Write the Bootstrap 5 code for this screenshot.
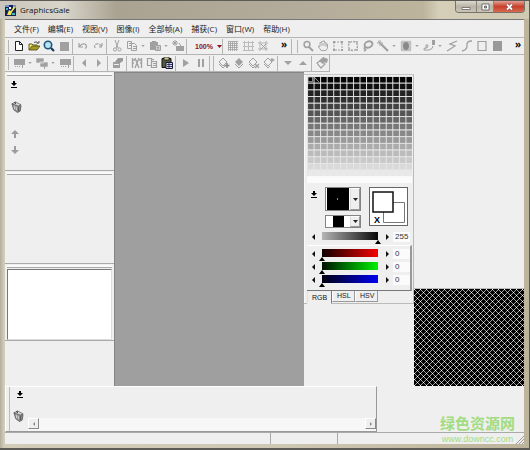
<!DOCTYPE html>
<html lang="zh-CN">
<head>
<meta charset="utf-8">
<meta name="viewport" content="width=device-width, initial-scale=1">
<title>GraphicsGale</title>
<link rel="stylesheet" href="https://cdn.jsdelivr.net/npm/bootstrap@5.3.0/dist/css/bootstrap.min.css">
<style>
  :root { --face: #efefef; --line: #a9a9a9; --off: #a0a0a0; }
  body { font: 8px/12px "Open Sans", "Noto Sans CJK SC", sans-serif; color: #222; background: #66635c; }
  button, input { font: inherit; color: inherit; }
  svg { display: block; flex: none; }
  .window { min-height: 100vh; padding: 0 5px 4px; border: 1px solid #5d5b55; border-width: 1px 1px 2px 0; background: linear-gradient(90deg, #b3ad9c, #d3ccb9 4px, #cfc8b4 50%, #bdb49b); }
  .titlebar { height: 18px; margin: 0 -5px; padding-left: 5px; background: linear-gradient(90deg, #cbc6bb 0, #d9d5ca 12%, #aaa392 22%, #b5ad9b 60%, #bdb49c 80%, #d5ceb8 83%, #d0cab2 100%); }
  .app-name { font-size: 8px; line-height: 16px; color: #111; }
  .caption { height: 12px; border: 1px solid #77736a; border-top: 0; border-radius: 0 0 4px 4px; overflow: hidden; }
  .caption button { border: 0; border-right: 1px solid #88847a; padding: 0; width: 17px; background: linear-gradient(#ddd9cf, #b9b4a6 50%, #c9c4b6); display: flex; align-items: center; justify-content: center; }
  .caption .shut { width: 30px; border: 0; background: linear-gradient(#e2a195, #c8402b 50%, #d96a4f); }
  .client { background: var(--face); border-top: 1px solid #777; }
  .menus { height: 18px; padding-left: 9px; gap: 9px; border-bottom: 1px solid #b4b4b4; }
  .menus a { color: #222; text-decoration: none; white-space: nowrap; }
  .tools { height: 17px; border-bottom: 1px solid #b4b4b4; color: var(--off); }
  .tools.short { border-right: 1px solid #b4b4b4; }
  .tb, .drop { border: 0; padding: 0; background: none; width: 15px; height: 15px; display: flex; align-items: center; justify-content: center; flex: none; }
  .drop { width: 8px; }
  .sep { width: 4px; flex: none; height: 15px; background: linear-gradient(#b5b5b5, #b5b5b5) 1px 0 / 1px 100% no-repeat; }
  .grip { width: 6px; flex: none; height: 13px; background: linear-gradient(#b5b5b5, #b5b5b5) 3px 0 / 1px 100% no-repeat; }
  .zoom-level { width: 32px; font: bold 7px/15px "Liberation Sans", sans-serif; color: #8c1018; border: 0; background: none; padding: 0 0 0 6px; gap: 4px; }
  .more { border: 0; background: none; padding: 0; width: 12px; font: bold 10px/11px "Open Sans", sans-serif; height: 15px; color: #111; display: flex; justify-content: center; }
  .side { width: 109px; flex: none; }
  .side-end { width: 110px; flex: none; }
  .pane { border-top: 1px solid #a8a8a8; margin: 3px 2px 0; box-shadow: 0 -2px 0 #fafafa; }
  .pane-end { border-bottom: 1px solid var(--line); display: flow-root; }
  .layers { height: 99px; }
  .layers .pane { height: 95px; padding-top: 1px; }
  .stack-tools { gap: 13px; }
  .bin { margin-bottom: 4px; }
  .moves { gap: 8px; }
  .frames { height: 93px; }
  .frames .pane { height: 89px; }
  .preview { height: 77px; }
  .preview .pane { height: 73px; padding-top: 1px; }
  .sheet { height: 71px; background: #fff; border: 1px solid #777; border-right-color: #ddd; border-bottom-color: #ddd; }
  .mdi { background: #9f9f9f; border-left: 1px solid #858585; border-top: 1px solid #858585; min-width: 0; }
  .colors { width: 110px; flex: none; height: 230px; margin-top: 2px; padding: 1px 1px 0 3px; border: 1px solid #bbb; border-left: 0; border-top-color: #c5c5c5; font: 8px/10px "Liberation Sans", sans-serif; box-shadow: inset 1px 0 #fafafa; }
  .swatches { width: 100%; height: 107px; }
  .well { border: 1px solid #858585; background: #fff; width: 36px; }
  .pick { width: 11px; border: 1px solid #999; border-top-color: #fff; border-left-color: #ddd; padding: 0; background: var(--face); display: flex; align-items: center; justify-content: center; }
  .pair { width: 39px; height: 39px; border: 1px solid #666; background: #fff; }
  .channel { height: 13px; gap: 0; }
  .step { width: 12px; height: 9px; border: 0; padding: 0; background: none; display: flex; align-items: center; justify-content: center; flex: none; color: #111; }
  .channel input[type=range] { -webkit-appearance: none; appearance: none; width: 0; flex: 1 1 0; min-width: 0; height: 12px; margin: 0; background: linear-gradient(90deg, var(--from), var(--to)) 3px 0 / calc(100% - 6px) 8px no-repeat; }
  .channel input[type=range]::-webkit-slider-thumb { -webkit-appearance: none; width: 6px; height: 4px; margin-top: 8px; background: #000; clip-path: polygon(50% 0, 100% 100%, 0 100%); }
  .channel input[type=range]::-moz-range-thumb { border: 0; border-radius: 0; width: 6px; height: 4px; background: #000; clip-path: polygon(50% 0, 100% 100%, 0 100%); }
  .num { width: 17px; height: 10px; border: 0; padding: 0 0 0 2px; background: #fbfbfb; color: #333; margin-right: 2px; }
  .grey { --from: #b5b5b5; --to: #080808; }
  .red { --from: #100000; --to: #f50000; }
  .green { --from: #001000; --to: #00f000; }
  .blue { --from: #000010; --to: #0000f0; }
  .mix { border: 1px solid #fff; border-left: 0; border-right: 2px solid #999; border-bottom: 1px solid #777; height: 46px; padding-top: 3px; }
  .mix .num { margin-right: 0; }
  .modes { font-size: 7px; border: 0; flex-wrap: nowrap; margin: 0; }
  .modes .nav-link { font: 7px/10px "Liberation Sans", sans-serif; color: #222; padding: 0 4px; height: 11px; border: 1px solid #999; border-left-color: #fff; border-top: 0; border-radius: 0; margin: 0; background: var(--face); width: 23px; }
  .modes .nav-link.active { height: 13px; line-height: 13px; background: var(--face); color: #111; width: 25px; border-right-color: #777; border-bottom-color: transparent; }
  .tiles { width: 100%; height: 98px; border-top: 1px solid #bbb; }
  .dock { height: 46px; width: 372px; max-width: 100%; border: 1px solid #fff; border-right-color: #999; border-bottom-color: #999; padding-left: 3px; }
  .dock-body { border-left: 1px solid #bbb; }
  .bar { height: 13px; background: #f7f7f7; }
  .bar button { width: 11px; height: 11px; border: 1px solid #888; border-top-color: #fff; border-left-color: #fff; background: var(--face); padding: 0; display: flex; align-items: center; justify-content: center; color: #888; }
  .dock-tools { padding: 4px 0 0 3px; gap: 12px; }
  .status { height: 12px; }
  .cell { border-top: 1px solid #aaa; }
  .cell + .cell { border-left: 1px solid #aaa; }
  .cell-a { width: 51%; } .cell-b { width: 13%; }
  .brand { position: absolute; right: 9px; bottom: 0; text-align: center; color: #a2dc82; font: 9px/10px "Liberation Sans", sans-serif; text-decoration: none; }
  .brand strong { display: block; font: bold 15px/22px "Noto Sans CJK SC", sans-serif; }
</style>
<script src="https://cdn.jsdelivr.net/npm/bootstrap@5.3.0/dist/js/bootstrap.bundle.min.js"></script>
</head>
<body>
<svg width="0" height="0" class="position-absolute" aria-hidden="true">
  <defs>
    <symbol id="caret" viewBox="0 0 5 3"><path d="M0 0h5L2.5 3z" fill="currentColor"/></symbol>
    <symbol id="left" viewBox="0 0 4 8"><path d="M4 0v8L0 4z" fill="currentColor"/></symbol>
    <symbol id="right" viewBox="0 0 4 8"><path d="M0 0v8l4-4z" fill="currentColor"/></symbol>
    <symbol id="pin" viewBox="0 0 6 7"><path d="M2 0h2v2h2L3 5 0 2h2zM0 6h6v1H0z" fill="#000"/></symbol>
    <symbol id="trash" viewBox="0 0 12 13"><path d="M1 3l8 1 2 1-1 6-3 1.500-4-3z" fill="#8b8b8b" stroke="#444" stroke-width=".7"/><path d="M1 3l4-2 6 3-3 1.500z" fill="#d5d5d5" stroke="#555" stroke-width=".7"/><path d="M3.500 5l.5 4M5.500 6l.5 4" stroke="#ddd"/><path d="M8.500 6L8 11" stroke="#555"/><path d="M4 1l1 2" stroke="#333" stroke-width="1.300"/></symbol>
    <symbol id="film" viewBox="0 0 12 12"><path d="M1 2h11v6H1z" fill="currentColor"/><path d="M2 9h1v1H2zM4 9h1v1H4zM6 9h1v1H6zM9 8h1v3H9z" fill="currentColor"/></symbol>
    <symbol id="diamond" viewBox="0 0 12 12"><path d="M5 1l4 4-4 4-4-4zM1 7l4 4 2-2" fill="none" stroke="currentColor"/></symbol>
    <symbol id="marquee" viewBox="0 0 12 12"><path d="M2 2h8v8H2z" fill="none" stroke="currentColor" stroke-dasharray="2 1"/><path d="M1 1h2v2H1zM9 1h2v2H9zM1 9h2v2H1zM9 9h2v2H9z" fill="currentColor"/></symbol>
    <pattern id="mesh" width="6" height="6" patternUnits="userSpaceOnUse"><path fill="#000" d="M0 0h6v6H0z"/><path fill="#a0a0a0" d="M1 1h1v1H1zM2 2h1v1H2zM4 4h1v1H4zM5 5h1v1H5zM5 1h1v1H5zM4 2h1v1H4zM2 4h1v1H2zM1 5h1v1H1z"/><path fill="#fff" d="M0 0h1v1H0zM3 3h1v1H3z"/></pattern>
    <pattern id="rules" width="20" height="20" patternUnits="userSpaceOnUse"><path d="M0 0h3v20H0zM0 0h20v3H0z" fill="#e6e6e6"/></pattern>
  </defs>
</svg>

<div class="window d-flex flex-column">
  <header class="titlebar d-flex justify-content-between">
    <div class="d-flex align-items-center">
      <svg width="11" height="11" viewBox="0 0 11 11"><path d="M0 0h11v11H0z" fill="#172452"/><path d="M0 0h4v2H0zM8 0h3v3H8z" fill="#6f8fd6"/><path d="M2 10l2-5 2 1 3-5 1 2-3 4-1 3z" fill="#f1e657"/><path d="M1 3h2v2H1zM7 8h3v2H7z" fill="#4bb2c3"/><path d="M4 2h2v2H4z" fill="#fff"/></svg>
      <span class="app-name ps-1">GraphicsGale</span>
    </div>
    <div class="caption d-flex me-1">
      <button type="button" aria-label="最小化" class="w-auto px-1"><svg width="12" height="8" viewBox="0 0 12 8"><path d="M2 4.5h8v2H2z" fill="#fff" stroke="#555" stroke-width=".7"/></svg></button>
      <button type="button" aria-label="最大化"><svg width="9" height="8" viewBox="0 0 9 8"><path d="M1 1h7v6H1zM3.500 3h2v2h-2z" fill="#fff" fill-rule="evenodd" stroke="#555" stroke-width=".8"/></svg></button>
      <button type="button" aria-label="关闭" class="shut"><svg width="9" height="8" viewBox="0 0 9 8"><path d="M2 1.500l5 5M7 1.500l-5 5" stroke="#733" stroke-width="3"/><path d="M2 1.500l5 5M7 1.500l-5 5" stroke="#fff" stroke-width="1.900"/></svg></button>
    </div>
  </header>

  <div class="client flex-grow-1 d-flex flex-column position-relative">
    <nav class="menus d-flex align-items-center">
      <a href="#">文件(F)</a><a href="#">编辑(E)</a><a href="#">视图(V)</a><a href="#">图像(I)</a><a href="#">全部帧(A)</a><a href="#">捕获(C)</a><a href="#">窗口(W)</a><a href="#">帮助(H)</a>
    </nav>

    <div class="tools d-flex align-items-center" role="toolbar" aria-label="标准">
      <span class="grip"></span>
      <button class="tb" aria-label="新建"><svg width="12" height="12" viewBox="0 0 12 12"><path d="M2.500 1.500h4l3 3v6h-7zM6.500 1.500v3h3" fill="#fff" stroke="#222"/></svg></button>
      <button class="tb" aria-label="打开"><svg width="12" height="12" viewBox="0 0 12 12"><path d="M1 10V4h3l1 1h4v2" fill="#f3ea70" stroke="#5d5a12"/><path d="M1 10l3-4h8l-3 4z" fill="#a79d26" stroke="#4b4810" stroke-width=".8"/><path d="M6 2.500q3-2 4 1M8.500 3h2.500V1" fill="none" stroke="#333" stroke-width=".8"/></svg></button>
      <button class="tb" aria-label="浏览"><svg width="12" height="12" viewBox="0 0 12 12"><circle cx="5" cy="5" r="3.700" fill="#b9e3f4" stroke="#1c5878" stroke-width="1.600"/><path d="M8 8l3 3" stroke="#143f5c" stroke-width="2.200"/></svg></button>
      <button class="tb" aria-label="保存"><svg width="12" height="12" viewBox="0 0 12 12"><path d="M2 2h9v9H2z" fill="currentColor"/></svg></button>
      <span class="sep"></span>
      <button class="tb" aria-label="撤销"><svg width="12" height="12" viewBox="0 0 12 12"><path d="M2 3v4h4M2.500 6.500Q5 3 8 4q3 2 0 4.500" fill="none" stroke="currentColor" stroke-width="1.200"/></svg></button>
      <button class="tb" aria-label="重做"><svg width="12" height="12" viewBox="0 0 12 12"><path d="M10 3v4H6M9.500 6.500Q7 3 4 4q-3 2 0 4.500" fill="none" stroke="currentColor" stroke-width="1.200" stroke-dasharray="3 1"/></svg></button>
      <span class="sep"></span>
      <button class="tb" aria-label="剪切"><svg width="12" height="12" viewBox="0 0 12 12"><path d="M4 0l3 8M8 0L5 8" stroke="currentColor"/><circle cx="4" cy="9.500" r="1.600" fill="none" stroke="currentColor"/><circle cx="8.500" cy="9.500" r="1.600" fill="none" stroke="currentColor"/></svg></button>
      <button class="tb" aria-label="复制"><svg width="12" height="12" viewBox="0 0 12 12"><path d="M1.500 1.500h4v7h-4zM5.500 3.500h3l2 2v5h-5zM3 3.500h2M3 5.500h2M7 6.500h3M7 8.500h3" fill="none" stroke="currentColor"/></svg></button>
      <button class="drop" aria-label="复制选项"><svg width="4" height="2"><use href="#caret"/></svg></button>
      <button class="tb" aria-label="粘贴"><svg width="12" height="12" viewBox="0 0 12 12"><path d="M1 2h2V1h4v1h2v3H6v5H1z" fill="currentColor"/><path d="M6.500 5.500h5v5h-5zM8 7.500h2M8 9h2" fill="#ccc" stroke="currentColor"/></svg></button>
      <button class="drop" aria-label="粘贴选项"><svg width="4" height="2"><use href="#caret"/></svg></button>
      <button class="tb" aria-label="粘贴为新图像"><svg width="12" height="12" viewBox="0 0 12 12"><path d="M4 6h8v5H4z" fill="currentColor"/><path d="M3 0v6M0 3h6M1 1l4 4M5 1L1 5M7 3l2 3" stroke="currentColor"/></svg></button>
      <span class="sep"></span>
      <button class="zoom-level d-flex align-items-center flex-shrink-0">100%<svg width="5" height="3"><use href="#caret"/></svg></button>
      <span class="sep"></span>
      <button class="tb" aria-label="像素网格"><svg width="12" height="12" viewBox="0 0 12 12"><path d="M1.500 1v10M3.500 1v10M5.500 1v10M7.500 1v10M9.500 1v10M1 1.500h10M1 3.500h10M1 5.500h10M1 7.500h10M1 9.500h10" stroke="currentColor" stroke-width=".8"/></svg></button>
      <button class="tb" aria-label="自定义网格"><svg width="12" height="12" viewBox="0 0 12 12"><path d="M2.500 1v10M6.500 1v10M10.500 1v10M1 2.500h11M1 6.500h11M1 10.500h11" stroke="#bbb"/></svg></button>
      <button class="tb" aria-label="贴齐网格"><svg width="12" height="12" viewBox="0 0 12 12"><path d="M3 1v10M9 1v10M1 3h10M1 9h10" stroke="#b5b5b5"/><path d="M4 4l5 5M9 4L4 9" stroke="currentColor"/></svg></button>
      <button class="more ms-auto" aria-label="更多">»</button>
      <span class="sep"></span>
      <span class="grip"></span>
      <button class="tb" aria-label="缩放"><svg width="12" height="12" viewBox="0 0 12 12"><circle cx="5" cy="4.500" r="2.900" fill="none" stroke="currentColor" stroke-width="1.500"/><path d="M7 7l4 4" stroke="currentColor" stroke-width="2"/></svg></button>
      <button class="tb" aria-label="移动"><svg width="12" height="12" viewBox="0 0 12 12"><path d="M4 10L1.500 7V6L3 6.500V2.500h1.500V1.500H6V1h1.500v1.500H9V4h1.500v4L9 10.500H4zM5 3v3M7 3v3M9 4v3" fill="none" stroke="currentColor" stroke-width=".9"/></svg></button>
      <button class="tb" aria-label="矩形选择"><svg width="12" height="12"><use href="#marquee"/></svg></button>
      <button class="tb" aria-label="椭圆选择"><svg width="12" height="12" viewBox="0 0 12 12"><circle cx="6" cy="6" r="4.500" fill="none" stroke="currentColor" stroke-width="1.300" stroke-dasharray="2.200 1.300"/><path d="M1 1h2v2H1zM9 1h2v2H9zM1 9h2v2H1zM9 9h2v2H9z" fill="#b5b5b5"/></svg></button>
      <button class="tb" aria-label="套索"><svg width="12" height="12" viewBox="0 0 12 12"><ellipse cx="6.500" cy="4.500" rx="4" ry="3" fill="none" stroke="currentColor" stroke-width="2" transform="rotate(-20 6.500 4.500)"/><path d="M4 7q-3 1-1 2t-1 2" fill="none" stroke="currentColor" stroke-width="1.500"/></svg></button>
      <button class="tb" aria-label="魔棒"><svg width="12" height="12" viewBox="0 0 12 12"><path d="M4 4l7 7" stroke="currentColor" stroke-width="2.200"/><path d="M3 0v6M0 3h6M1 1l4 4" stroke="currentColor"/></svg></button>
      <button class="drop" aria-label="选择选项"><svg width="4" height="2"><use href="#caret"/></svg></button>
      <button class="tb" aria-label="选区"><svg width="12" height="12" viewBox="0 0 12 12"><path d="M1.500 1.500h9v9h-9z" fill="#ccc" stroke="currentColor" stroke-dasharray="1 1" stroke-width="1.500"/><ellipse cx="6" cy="6" rx="3" ry="4" fill="#888"/></svg></button>
      <button class="drop" aria-label="选区选项"><svg width="4" height="2"><use href="#caret"/></svg></button>
      <button class="tb" aria-label="画笔"><svg width="12" height="12" viewBox="0 0 12 12"><path d="M9 0h3v5H9z" fill="currentColor"/><path d="M10 6q0 3-4 4H1q-1-2 2-2V5q2-1 2 1T3 8" fill="none" stroke="currentColor"/></svg></button>
      <button class="drop" aria-label="画笔选项"><svg width="4" height="2"><use href="#caret"/></svg></button>
      <button class="tb" aria-label="折线"><svg width="12" height="12" viewBox="0 0 12 12"><path d="M11 1L4 4l5 2-8 5" fill="none" stroke="currentColor" stroke-width="1.300"/></svg></button>
      <button class="tb" aria-label="曲线"><svg width="12" height="12" viewBox="0 0 12 12"><path d="M11 1Q5 1 6 6q0 4-5 5" fill="none" stroke="currentColor" stroke-width="1.300"/></svg></button>
      <button class="tb" aria-label="矩形"><svg width="12" height="12" viewBox="0 0 12 12"><path d="M2 1.500h8v9H2z" fill="none" stroke="currentColor" stroke-width="1.200"/></svg></button>
      <button class="tb" aria-label="填充矩形"><svg width="12" height="12" viewBox="0 0 12 12"><path d="M2 1h9v10H2z" fill="#999"/></svg></button>
      <button class="more ms-auto" aria-label="更多工具">»</button>
    </div>

    <div class="tools short d-flex align-items-center align-self-start" role="toolbar" aria-label="动画">
      <span class="grip"></span>
      <button class="tb" aria-label="添加帧"><svg width="12" height="12"><use href="#film"/></svg></button>
      <button class="drop" aria-label="添加帧选项"><svg width="4" height="2"><use href="#caret"/></svg></button>
      <button class="tb" aria-label="复制帧"><svg width="12" height="12" viewBox="0 0 12 12"><path d="M0 1h8v5H0zM4 5h8v5H4z" fill="currentColor" stroke="#eee" stroke-width=".6"/><path d="M8 9h1v3H8z" fill="currentColor"/></svg></button>
      <button class="drop" aria-label="复制帧选项"><svg width="4" height="2"><use href="#caret"/></svg></button>
      <button class="tb" aria-label="删除帧"><svg width="12" height="12"><use href="#film"/></svg></button>
      <span class="sep"></span>
      <button class="tb" aria-label="上一帧"><svg width="4" height="8"><use href="#left"/></svg></button>
      <button class="tb" aria-label="下一帧"><svg width="4" height="8"><use href="#right"/></svg></button>
      <span class="sep"></span>
      <button class="tb" aria-label="帧属性"><svg width="12" height="12" viewBox="0 0 12 12"><path d="M1 5h7v6H1z" fill="currentColor"/><path d="M3 5l3-4h5v3L8 6" fill="#999"/><path d="M2 7.500h5" stroke="#eee"/></svg></button>
      <span class="sep"></span>
      <button class="tb" aria-label="剪切帧"><svg width="12" height="12" viewBox="0 0 12 12"><path d="M1.500 1v10M10.500 1v10M4 1l4 10M8 1L4 11M1 3h3M8 3h3M1 6h2M9 6h2" stroke="currentColor" stroke-width="1.300"/></svg></button>
      <button class="tb" aria-label="复制帧内容"><svg width="12" height="12" viewBox="0 0 12 12"><path d="M1.500 1.500h4v7h-4zM5.500 4.500h5v6h-5zM5 2.500h3M7 6.500h3M7 8.500h3" fill="none" stroke="currentColor" stroke-width="1.200"/></svg></button>
      <button class="tb" aria-label="粘贴帧"><svg width="12" height="12" viewBox="0 0 12 12"><path d="M1 1.500h9v9H1z" fill="#55573f" stroke="#111"/><path d="M3 0h5v3H3z" fill="#c8c48e" stroke="#111" stroke-width=".7"/><path d="M5 5.500h6.500v6H5z" fill="#dde" stroke="#16183c"/><path d="M6 7.500h5M6 9.500h5M8 6v5" stroke="#16183c" stroke-width=".8"/></svg></button>
      <span class="sep"></span>
      <button class="tb" aria-label="播放"><svg width="6" height="8" viewBox="0 0 6 8"><path d="M0 0l6 4-6 4z" fill="currentColor"/></svg></button>
      <button class="tb" aria-label="暂停"><svg width="6" height="8" viewBox="0 0 6 8"><path d="M0 0h2v8H0zM4 0h2v8H4z" fill="currentColor"/></svg></button>
      <span class="sep"></span><span class="sep"></span>
      <button class="tb" aria-label="添加图层"><svg width="12" height="12" viewBox="0 0 12 12"><use href="#diamond"/><path d="M9 6v5M6.500 8.500h5" stroke="#888" stroke-width="1.500"/></svg></button>
      <button class="tb" aria-label="复制图层"><svg width="12" height="12" viewBox="0 0 12 12"><path d="M6 1l4 4-4 4-4-4z" fill="currentColor"/><path d="M2 7l4 4 4-4" fill="none" stroke="currentColor"/></svg></button>
      <button class="tb" aria-label="删除图层"><svg width="12" height="12" viewBox="0 0 12 12"><use href="#diamond"/><path d="M7 7l4 4M11 7l-4 4" stroke="currentColor" stroke-width="1.300"/></svg></button>
      <button class="tb" aria-label="合并图层"><svg width="12" height="12" viewBox="0 0 12 12"><use href="#diamond"/><path d="M9 1v4M7.500 3h4" stroke="currentColor" stroke-width="1.300"/></svg></button>
      <span class="sep"></span>
      <button class="tb" aria-label="下一图层"><svg width="8" height="4" viewBox="0 0 8 4"><path d="M0 0h8L4 4z" fill="currentColor"/></svg></button>
      <button class="tb" aria-label="上一图层"><svg width="8" height="4" viewBox="0 0 8 4"><path d="M0 4h8L4 0z" fill="currentColor"/></svg></button>
      <span class="sep"></span>
      <button class="tb" aria-label="图层属性"><svg width="12" height="12" viewBox="0 0 12 12"><path d="M1 6l4-3 4 4-4 4z" fill="none" stroke="currentColor" stroke-width="1.200"/><path d="M3 4l4-4 5 2-1 4-3-1-1 2z" fill="currentColor"/></svg></button>
    </div>

    <main class="d-flex flex-grow-1">
      <aside class="side">
        <section class="layers pane-end" aria-label="图层"><div class="pane"><div class="stack-tools d-flex flex-column align-items-start pt-1">
          <svg width="6" height="7" class="ms-1"><use href="#pin"/></svg>
          <svg width="11" height="12" class="bin ms-1"><use href="#trash"/></svg>
          <div class="moves d-flex flex-column ms-1">
            <svg width="8" height="8" viewBox="0 0 8 8"><path d="M4 0l4 4H5v4H3V4H0z" fill="#9c9c9c"/></svg>
            <svg width="8" height="8" viewBox="0 0 8 8"><path d="M4 8l4-4H5V0H3v4H0z" fill="#9c9c9c"/></svg>
          </div>
        </div></div></section>
        <section class="frames pane-end" aria-label="帧"><div class="pane"></div></section>
        <section class="preview pane-end" aria-label="预览"><div class="pane"><div class="sheet"></div></div></section>
      </aside>
      <section class="mdi flex-grow-1" aria-label="工作区"></section>
      <aside class="colors" aria-label="调色板">
        <svg class="swatches" viewBox="0 0 320 320" preserveAspectRatio="none">
          <path fill="#050505" d="M0 0h320v20H0z"/><path fill="#101010" d="M0 20h320v20H0z"/><path fill="#222" d="M0 40h320v20H0z"/><path fill="#303030" d="M0 60h320v20H0z"/><path fill="#424242" d="M0 80h320v20H0z"/><path fill="#555" d="M0 100h320v20H0z"/><path fill="#666" d="M0 120h320v20H0z"/><path fill="#777" d="M0 140h320v20H0z"/><path fill="#888" d="M0 160h320v20H0z"/><path fill="#9a9a9a" d="M0 180h320v20H0z"/><path fill="#ababab" d="M0 200h320v20H0z"/><path fill="#bbb" d="M0 220h320v20H0z"/><path fill="#c9c9c9" d="M0 240h320v20H0z"/><path fill="#d9d9d9" d="M0 260h320v20H0z"/><path fill="#e9e9e9" d="M0 280h320v20H0z"/>
          <path fill="url(#rules)" d="M0 0h320v300H0z"/><path fill="#fbfbfb" d="M0 300h320v20H0z"/>
          <path d="M3 3h14v14H3z" fill="none" stroke="#ddd" stroke-width="2"/><path d="M22 3l14 15" stroke="#ddd" stroke-width="2"/>
        </svg>
        <div class="d-flex justify-content-between mt-1 pe-1">
          <svg width="6" height="7" class="mt-1 ms-1"><use href="#pin"/></svg>
          <div class="d-flex flex-column gap-1">
            <div class="well d-flex"><svg width="24" height="22" viewBox="0 0 24 22"><path d="M1 0h22v22H1z"/><path d="M11 10h1v2h-1z" fill="#888"/></svg><button class="pick ms-auto" aria-label="画笔形状"><svg width="5" height="3"><use href="#caret"/></svg></button></div>
            <div class="well d-flex"><svg width="24" height="11" viewBox="0 0 24 11"><path d="M7 0h11v11H7z"/></svg><button class="pick ms-auto" aria-label="图案"><svg width="5" height="3"><use href="#caret"/></svg></button></div>
          </div>
          <svg class="pair" viewBox="0 0 37 37" role="img" aria-label="前景色与背景色"><path d="M13.500 14.500h21v20h-21z" fill="#fff" stroke="#777"/><path d="M3 4h20v20H3z" fill="#fff" stroke="#111" stroke-width="1.500"/><text x="4" y="35" font-size="9" font-weight="bold" font-family="Liberation Sans, sans-serif">X</text></svg>
        </div>
        <div class="channel grey d-flex mt-1"><button class="step" aria-label="减少"><svg width="3" height="6"><use href="#left"/></svg></button><input type="range" min="0" max="255" value="255" aria-label="不透明度"><button class="step" aria-label="增加"><svg width="3" height="6"><use href="#right"/></svg></button><input class="num" type="text" value="255" aria-label="不透明度数值"></div>
        <div class="mix">
          <div class="channel red d-flex"><button class="step" aria-label="减少红"><svg width="3" height="6"><use href="#left"/></svg></button><input type="range" min="0" max="255" value="0" aria-label="红"><button class="step" aria-label="增加红"><svg width="3" height="6"><use href="#right"/></svg></button><input class="num" type="text" value="0" aria-label="红数值"></div>
          <div class="channel green d-flex"><button class="step" aria-label="减少绿"><svg width="3" height="6"><use href="#left"/></svg></button><input type="range" min="0" max="255" value="0" aria-label="绿"><button class="step" aria-label="增加绿"><svg width="3" height="6"><use href="#right"/></svg></button><input class="num" type="text" value="0" aria-label="绿数值"></div>
          <div class="channel blue d-flex"><button class="step" aria-label="减少蓝"><svg width="3" height="6"><use href="#left"/></svg></button><input type="range" min="0" max="255" value="0" aria-label="蓝"><button class="step" aria-label="增加蓝"><svg width="3" height="6"><use href="#right"/></svg></button><input class="num" type="text" value="0" aria-label="蓝数值"></div>
        </div>
        <div class="nav nav-tabs modes" role="tablist"><button class="nav-link active" role="tab">RGB</button><button class="nav-link" role="tab">HSL</button><button class="nav-link" role="tab">HSV</button></div>
      </aside>
      <aside class="side-end d-flex flex-column justify-content-end" aria-label="平铺预览">
        <div class="ps-0 ms-auto w-100 d-flex justify-content-end"><svg class="tiles ms-1"><rect width="100%" height="100%" fill="url(#mesh)"/></svg></div>
      </aside>
    </main>

    <section class="dock d-flex" aria-label="帧列表">
      <div class="dock-body flex-grow-1 d-flex">
        <div class="dock-tools d-flex flex-column"><svg width="6" height="7" class="ms-1"><use href="#pin"/></svg><svg width="11" height="12"><use href="#trash"/></svg></div>
        <div class="flex-grow-1 d-flex flex-column justify-content-end ms-1">
          <div class="bar d-flex justify-content-between"><button aria-label="向左滚动"><svg width="2" height="4"><use href="#left"/></svg></button><button aria-label="向右滚动"><svg width="2" height="4"><use href="#right"/></svg></button></div>
        </div>
      </div>
    </section>
    <footer class="status d-flex">
      <div class="cell cell-a"></div><div class="cell cell-b"></div>
      <div class="cell flex-grow-1 d-flex justify-content-end align-items-end"><svg width="8" height="8" viewBox="0 0 8 8"><path d="M0 8l8-8M3 8l5-5M6 8l2-2" stroke="#999"/></svg></div>
    </footer>
    <a class="brand" href="#"><strong>绿色资源网</strong>www.downcc.com</a>
  </div>
</div>
</body>
</html>
